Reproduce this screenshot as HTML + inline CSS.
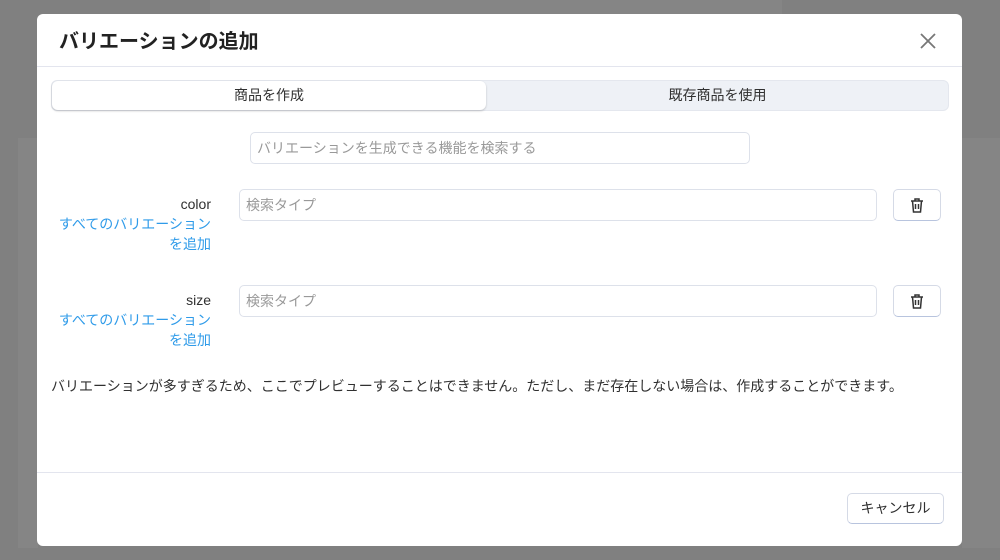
<!DOCTYPE html><html><head><meta charset="utf-8"><style>
*{box-sizing:border-box;margin:0;padding:0}
body{width:1000px;height:560px;background:#808080;font-family:"Liberation Sans","Noto Sans CJK JP",sans-serif;position:relative;overflow:hidden;color:#303030}
.bg{position:absolute;background:#7a7a7a}
.m{position:absolute;left:37px;top:14px;width:925px;height:532px;background:#fff;border-radius:6px;overflow:hidden}
.h{height:53px;border-bottom:1px solid #e3e5ee;position:relative}
.h h1{position:absolute;left:22px;top:11px;font-size:20px;font-weight:bold;color:#222}
.x{position:absolute;right:25px;top:18px}
.tabs{position:absolute;left:14px;top:66px;width:898px;height:31px;background:#eef1f6;border-radius:6px;border:1px solid #e4e7ee}
.tab{position:absolute;top:0;height:29px;font-size:14px;line-height:29px;text-align:center}
.t1{left:0;width:434px;background:#fff;border-radius:6px;box-shadow:0 1px 2px rgba(0,0,0,.2)}
.t2{left:434px;width:463px}
.in{position:absolute;border:1px solid #dde1ea;border-radius:5px;height:32px;font-size:14px;color:#999;line-height:30px;padding-left:6px}
.lab{position:absolute;right:751px;text-align:right;font-size:14px;line-height:20px}
.lab .a{color:#2f9be9}
.btn{position:absolute;left:856px;width:48px;height:32px;border:1px solid #d5dae6;border-bottom-color:#b8c4de;border-radius:5px;display:flex;align-items:center;justify-content:center}
.msg{position:absolute;left:14px;top:362px;font-size:14px}
.f{position:absolute;left:0;top:458px;width:100%;border-top:1px solid #e3e5ee}
.c{position:absolute;left:810px;top:479px;width:97px;height:31px;border:1px solid #d5dae6;border-bottom-color:#b8c4de;border-radius:5px;font-size:14px;text-align:center;line-height:29px}
</style></head><body>
<div class="bg" style="left:210px;top:0;width:572px;height:14px;background:#858585"></div>
<div class="bg" style="left:18px;top:138px;width:20px;height:410px;background:#858585"></div>
<div class="bg" style="left:962px;top:138px;width:38px;height:410px;background:#858585"></div>
<div class="m">
<div class="h"><h1>バリエーションの追加</h1>
<svg class="x" width="18" height="18" viewBox="0 0 18 18"><path d="M2 2L16 16M16 2L2 16" stroke="#777" stroke-width="1.8"/></svg></div>
<div class="tabs"><div class="tab t1">商品を作成</div><div class="tab t2">既存商品を使用</div></div>
<div class="in" style="left:213px;top:118px;width:500px">バリエーションを生成できる機能を検索する</div>
<div class="lab" style="top:180px">color<br><span class="a">すべてのバリエーション<br>を追加</span></div>
<div class="in" style="left:202px;top:175px;width:638px">検索タイプ</div>
<div class="btn" style="top:175px"><svg width="16" height="17" viewBox="0 0 16 17"><path d="M2 4H14M6 4V2H10V4M3.5 4L4.5 15H11.5L12.5 4M6.5 7V12M9.5 7V12" stroke="#333" stroke-width="1.5" fill="none"/></svg></div>
<div class="lab" style="top:276px">size<br><span class="a">すべてのバリエーション<br>を追加</span></div>
<div class="in" style="left:202px;top:271px;width:638px">検索タイプ</div>
<div class="btn" style="top:271px"><svg width="16" height="17" viewBox="0 0 16 17"><path d="M2 4H14M6 4V2H10V4M3.5 4L4.5 15H11.5L12.5 4M6.5 7V12M9.5 7V12" stroke="#333" stroke-width="1.5" fill="none"/></svg></div>
<div class="msg">バリエーションが多すぎるため、ここでプレビューすることはできません。ただし、まだ存在しない場合は、作成することができます。</div>
<div class="f"></div>
<div class="c">キャンセル</div>
</div>
</body></html>
